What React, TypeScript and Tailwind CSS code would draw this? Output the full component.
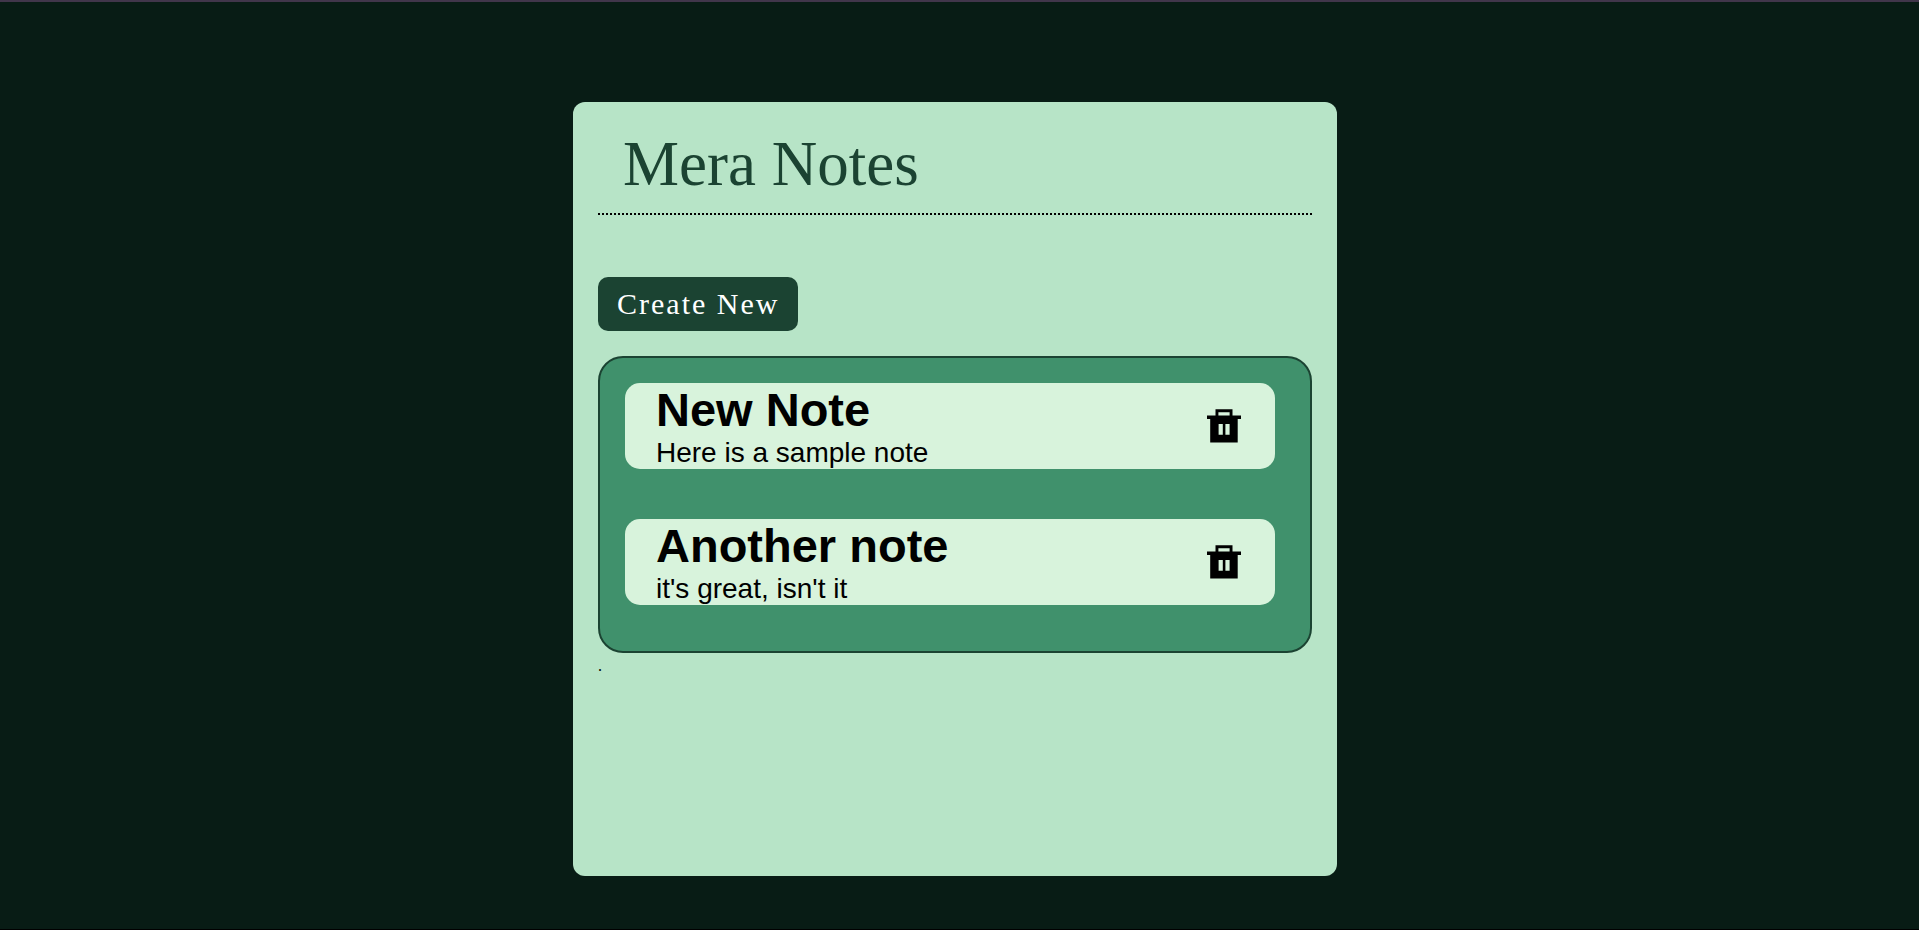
import React from "react";

type Note = { id: number; title: string; body: string };

const notes: Note[] = [
  { id: 1, title: "New Note", body: "Here is a sample note" },
  { id: 2, title: "Another note", body: "it's great, isn't it" },
];

function TrashIcon() {
  return (
    <svg width="34" height="34" viewBox="0 0 34 34" aria-hidden="true">
      <path
        fillRule="evenodd"
        d="M8.5 0.3h17V6.5H34V10h-3.3V33.5H3.2V10H0V6.5h8.5zM11.4 3.3V6.5H22.6V3.3zM11.6 15v10.7h4.2V15zM18.4 15v10.7h4.2V15z"
        fill="#000000"
      />
    </svg>
  );
}

function NoteCard({ note }: { note: Note }) {
  return (
    <li className="flex items-center justify-between rounded-[15px] bg-[#d8f3dc] pr-[34px] pl-[31px]">
      <div className="font-['Liberation_Sans',Arial,sans-serif] text-black">
        <h2 className="text-[47px] leading-[54px] font-bold">{note.title}</h2>
        <p className="text-[28px] leading-8">{note.body}</p>
      </div>
      <button type="button" aria-label={`Delete ${note.title}`} className="cursor-pointer">
        <TrashIcon />
      </button>
    </li>
  );
}

export default function App() {
  return (
    <div className="flex min-h-screen flex-col border-t-2 border-b border-t-[#41364b] border-b-black bg-[#081c15] pt-[100px] pr-[9px] pb-[53px] font-['Liberation_Serif','Times_New_Roman',serif]">
      <main className="mx-auto flex w-2/5 flex-1 flex-col rounded-[12px] bg-[#b7e4c7] p-[25px]">
        <header className="border-b-2 border-dotted border-black px-[25px] pb-3">
          <h1 className="text-[63px] leading-[74px] text-[#1b4332]">Mera Notes</h1>
        </header>
        <button
          type="button"
          className="mt-[62px] cursor-pointer self-start rounded-[10px] bg-[#1b4332] px-[19px] py-[10px] text-[30px] leading-[34px] tracking-[2px] text-white"
        >
          Create New
        </button>
        <ul className="mt-[25px] flex flex-col gap-[50px] rounded-[25px] border-2 border-[#1b4332] bg-[#40916c] pt-[25px] pr-[35px] pb-[46px] pl-[25px]">
          {notes.map((note) => (
            <NoteCard key={note.id} note={note} />
          ))}
        </ul>
        <p className="text-base leading-[26px] text-black">.</p>
      </main>
    </div>
  );
}
